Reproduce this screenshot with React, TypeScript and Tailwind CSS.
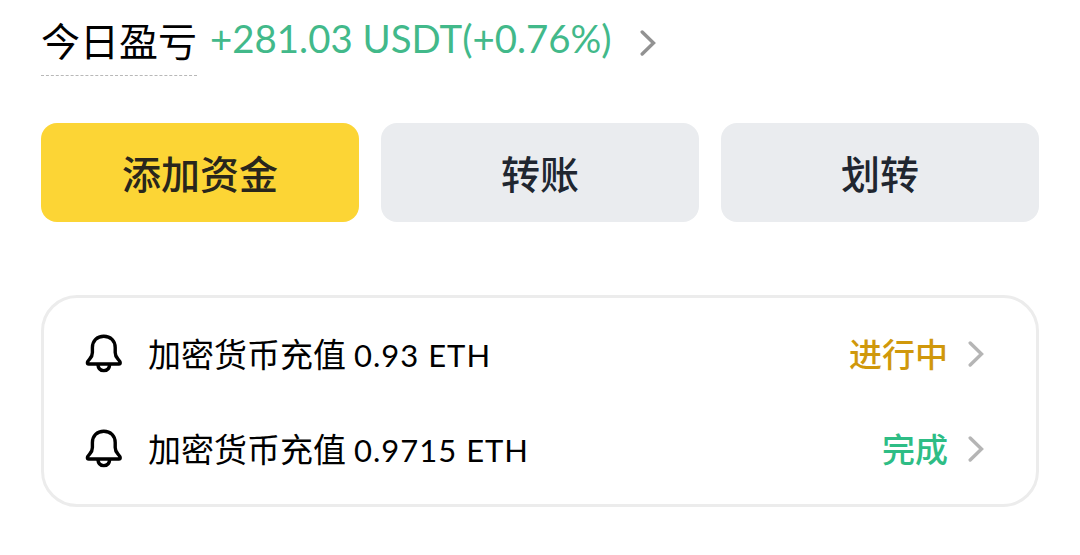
import { ReactNode } from "react";

interface NoticeInterface {
  title: string;
  amount: string;
  status: string;
  statusColor: string;
}

const notices: NoticeInterface[] = [
  {
    title: "加密货币充值",
    amount: "0.93 ETH",
    status: "进行中",
    statusColor: "text-[#d0980b]",
  },
  {
    title: "加密货币充值",
    amount: "0.9715 ETH",
    status: "完成",
    statusColor: "text-[#2ebd85]",
  },
];

const Chevron = ({ className }: { className: string }) => (
  <svg
    className={`shrink-0 ${className}`}
    width="16"
    height="28"
    viewBox="0 0 16 28"
    fill="none"
    stroke="currentColor"
    strokeWidth="3.4"
    strokeLinecap="round"
  >
    <path d="M2.200 3 13.500 14 2.200 25" />
  </svg>
);

const Bell = () => (
  <svg
    className="shrink-0"
    width="38"
    height="40"
    viewBox="0 0 38 40"
    fill="none"
    stroke="#000"
    strokeWidth="3.4"
    strokeLinejoin="round"
  >
    <path d="M18.800 2.200C12 2.200 7.400 7 7.400 13.600v4.800c0 2.800-.9 4.700-2.800 6.800-1.500 1.600-2.200 2.400-2.200 3.600 0 .8.500 1.200 1.300 1.200h30.200c.8 0 1.300-.4 1.300-1.200 0-1.200-.7-2-2.200-3.600-1.900-2.100-2.800-4-2.800-6.800v-4.800c0-6.600-4.600-11.400-11.400-11.400Z" />
    <path d="M12.900 30.500c.3 3.800 2.600 6.100 5.900 6.100s5.600-2.300 5.900-6.100" />
  </svg>
);

const ActionButton = ({
  className,
  children,
}: {
  className: string;
  children: ReactNode;
}) => (
  <button
    className={`flex h-[99px] items-center justify-center rounded-2xl text-[39px] leading-none font-medium ${className}`}
    type="button"
  >
    {children}
  </button>
);

export default function App() {
  return (
    <div className="h-[555px] w-[1080px] overflow-hidden bg-white px-[41px] font-['Noto_Sans_CJK_SC',sans-serif] text-black">
      <div className="flex h-[123px] items-start pt-[18px]">
        <div className="h-[58px] w-[156px] border-b border-dashed border-[#b8b8b8] text-[39px] leading-[43px] whitespace-nowrap">
          今日盈亏
        </div>
        <div className="ml-[13px] w-[402px] font-['Lato',sans-serif] text-[38.4px] leading-[41px] whitespace-nowrap text-[#42b98a]">
          +281.03 USDT(+0.76%)
        </div>
        <Chevron className="mt-[11px] ml-7 text-[#929292]" />
      </div>

      <div className="grid grid-cols-3 gap-[22px]">
        <ActionButton className="bg-[#fcd535] text-[#29261c]">
          添加资金
        </ActionButton>
        <ActionButton className="bg-[#eaecef] text-[#202630]">
          转账
        </ActionButton>
        <ActionButton className="bg-[#eaecef] text-[#202630]">
          划转
        </ActionButton>
      </div>

      <div className="mt-[73px] h-[212px] rounded-[36px] border-[3px] border-[#ececec] pt-2 pr-[52px] pl-[41px]">
        {notices.map((notice) => (
          <div className="flex h-[95px] items-center" key={notice.amount}>
            <Bell />
            <span className="-mt-0.5 ml-[25px] text-[33px] leading-[40px]">
              {notice.title}
            </span>
            <span className="ml-2 pt-[3px] font-['Lato',sans-serif] text-[31px] leading-[40px] tracking-[1px]">
              {notice.amount}
            </span>
            <span
              className={`-mt-0.5 ml-auto text-[33px] leading-[40px] font-medium ${notice.statusColor}`}
            >
              {notice.status}
            </span>
            <Chevron className="ml-5 text-[#b5b5b5]" />
          </div>
        ))}
      </div>
    </div>
  );
}
